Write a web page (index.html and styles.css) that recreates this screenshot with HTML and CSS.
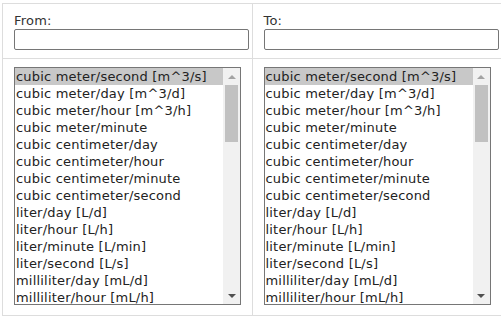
FILE: index.html
```html
<!DOCTYPE html>
<html lang="en">
<head>
  <meta charset="UTF-8" />
  <title>Flow rate converter</title>
  <link rel="stylesheet" href="styles.css">
</head>
<body>
  <table class="converter">
    <tr class="values">
      <td>
        <label for="fromVal">From:</label>
        <input type="text" id="fromVal" />
      </td>
      <td>
        <label for="toVal">To:</label>
        <input type="text" id="toVal" />
      </td>
    </tr>
    <tr class="units">
      <td>
        <div class="listbox" role="listbox" id="fromUnit">
          <ul class="options">
            <li class="selected">cubic meter/second [m^3/s]</li>
            <li>cubic meter/day [m^3/d]</li>
            <li>cubic meter/hour [m^3/h]</li>
            <li>cubic meter/minute</li>
            <li>cubic centimeter/day</li>
            <li>cubic centimeter/hour</li>
            <li>cubic centimeter/minute</li>
            <li>cubic centimeter/second</li>
            <li>liter/day [L/d]</li>
            <li>liter/hour [L/h]</li>
            <li>liter/minute [L/min]</li>
            <li>liter/second [L/s]</li>
            <li>milliliter/day [mL/d]</li>
            <li>milliliter/hour [mL/h]</li>
          </ul>
          <div class="scrollbar">
            <span class="arrow up"></span>
            <span class="track"><span class="thumb"></span></span>
            <span class="arrow down"></span>
          </div>
        </div>
      </td>
      <td>
        <div class="listbox" role="listbox" id="toUnit">
          <ul class="options">
            <li class="selected">cubic meter/second [m^3/s]</li>
            <li>cubic meter/day [m^3/d]</li>
            <li>cubic meter/hour [m^3/h]</li>
            <li>cubic meter/minute</li>
            <li>cubic centimeter/day</li>
            <li>cubic centimeter/hour</li>
            <li>cubic centimeter/minute</li>
            <li>cubic centimeter/second</li>
            <li>liter/day [L/d]</li>
            <li>liter/hour [L/h]</li>
            <li>liter/minute [L/min]</li>
            <li>liter/second [L/s]</li>
            <li>milliliter/day [mL/d]</li>
            <li>milliliter/hour [mL/h]</li>
          </ul>
          <div class="scrollbar">
            <span class="arrow up"></span>
            <span class="track"><span class="thumb"></span></span>
            <span class="arrow down"></span>
          </div>
        </div>
      </td>
    </tr>
  </table>
</body>
</html>
```

FILE: styles.css
```css
body {
  margin: 3px 2px;
  background: #fff;
  color: #333;
  font-family: "DejaVu Sans", Verdana, sans-serif;
  font-size: 13px;
  letter-spacing: 0.2px;
}

.converter {
  border-collapse: collapse;
  width: 500px;
}

.converter td {
  border: 1px solid #ddd;
  padding: 8px 2px 8px 11px;
  vertical-align: top;
  width: 50%;
}

.units td {
  padding-bottom: 10px;
}

label {
  display: block;
  line-height: 17px;
}

input[type="text"] {
  box-sizing: border-box;
  width: 235px;
  height: 21px;
  border: 1px solid #767676;
  border-radius: 2px;
  font: inherit;
  display: block;
}

.listbox {
  box-sizing: border-box;
  width: 227px;
  height: 238px;
  border: 1px solid #767676;
  display: flex;
  overflow: hidden;
}

.options {
  flex: 1;
  list-style: none;
  margin: 0;
  padding: 0;
  overflow: hidden;
  color: #222;
}

.options li {
  height: 17px;
  line-height: 17px;
  padding-left: 1px;
  white-space: nowrap;
}

.options li.selected {
  background: #c8c8c8;
}

.scrollbar {
  width: 17px;
  background: #f1f1f1;
  display: flex;
  flex-direction: column;
}

.arrow {
  height: 17px;
  display: flex;
  align-items: center;
  justify-content: center;
}

.arrow::before {
  content: "";
  border-left: 4px solid transparent;
  border-right: 4px solid transparent;
}

.arrow.up::before {
  border-bottom: 4px solid #a3a3a3;
}

.arrow.down::before {
  border-top: 4px solid #505050;
}

.track {
  flex: 1;
  display: flex;
  flex-direction: column;
  padding: 0 2px;
}

.thumb {
  height: 57px;
  background: #c1c1c1;
}
```
